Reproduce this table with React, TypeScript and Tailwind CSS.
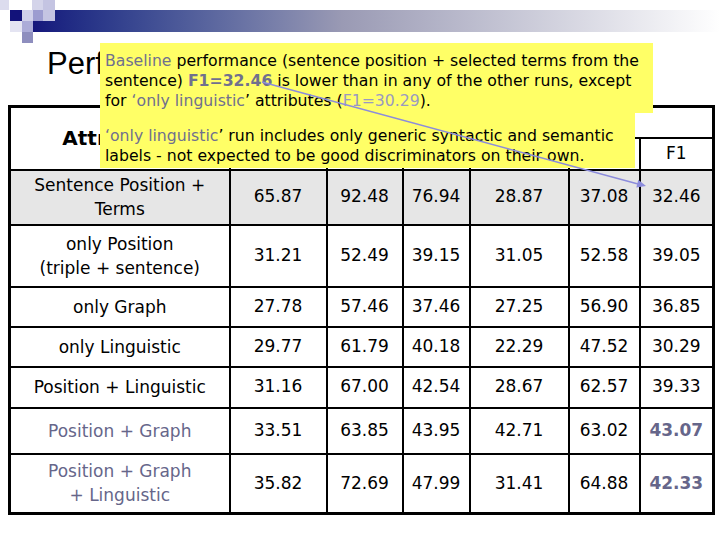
const rows = [
  { label: ["Sentence Position +", "Terms"], vals: ["65.87", "92.48", "76.94", "28.87", "37.08", "32.46"], h: "h-[55px]", bg: "bg-[#e6e6e6]", muted: false, best: false },
  { label: ["only Position", "(triple + sentence)"], vals: ["31.21", "52.49", "39.15", "31.05", "52.58", "39.05"], h: "h-[62px]", bg: "bg-white", muted: false, best: false },
  { label: ["only Graph"], vals: ["27.78", "57.46", "37.46", "27.25", "56.90", "36.85"], h: "h-[40px]", bg: "bg-white", muted: false, best: false },
  { label: ["only Linguistic"], vals: ["29.77", "61.79", "40.18", "22.29", "47.52", "30.29"], h: "h-[40px]", bg: "bg-white", muted: false, best: false },
  { label: ["Position + Linguistic"], vals: ["31.16", "67.00", "42.54", "28.67", "62.57", "39.33"], h: "h-[41px]", bg: "bg-white", muted: false, best: false },
  { label: ["Position + Graph"], vals: ["33.51", "63.85", "43.95", "42.71", "63.02", "43.07"], h: "h-[46px]", bg: "bg-white", muted: true, best: true },
  { label: ["Position + Graph", "+ Linguistic"], vals: ["35.82", "72.69", "47.99", "31.41", "64.88", "42.33"], h: "h-[60px]", bg: "bg-white", muted: true, best: true },
];

function Logo() {
  return (
    <svg width="56" height="44" viewBox="0 0 56 44">
      <rect x="0" y="0" width="9" height="10" fill="#dcdcee" />
      <rect x="32" y="0" width="11" height="10" fill="#d4d4ea" />
      <rect x="43" y="0" width="12" height="21" fill="#c4c4e2" />
      <rect x="10" y="10" width="12" height="11" fill="#12127a" />
      <rect x="22" y="10" width="11" height="11" fill="#d0d0ea" />
      <rect x="33" y="10" width="10" height="11" fill="#9c9cd0" />
      <rect x="10" y="21" width="12" height="11" fill="#e4e4f2" />
      <rect x="22" y="21" width="11" height="11" fill="#acacd8" />
      <rect x="22" y="32" width="11" height="11" fill="#8e8ebe" />
    </svg>
  );
}

export default function App() {
  return (
    <div className="relative w-[720px] h-[540px] overflow-hidden bg-white font-['DejaVu_Sans',sans-serif] text-black">
      {/* Header strip */}
      <div className="relative h-[44px] pt-[10px]">
        <div className="ml-[33px] h-[22px] bg-linear-to-r from-[#16167c] via-[#9a9ab4] via-45% to-white" />
        <div className="absolute left-0 top-0 z-10">
          <Logo />
        </div>
      </div>

      {/* Title */}
      <h1 className="ml-[47px] h-[61px] font-['Liberation_Sans',sans-serif] text-[31px] leading-[40px]">
        Performance
      </h1>

      {/* Table */}
      <table className="ml-[8px] w-[704px] table-fixed border-collapse border-[3px] border-black text-center text-[17px]">
        <colgroup>
          <col className="w-[220px]" />
          <col className="w-[97px]" />
          <col className="w-[76px]" />
          <col className="w-[67px]" />
          <col className="w-[99px]" />
          <col className="w-[71px]" />
          <col className="w-[74px]" />
        </colgroup>
        <thead>
          <tr className="h-[31px]">
            <th rowSpan={2} className="border-2 border-black text-[20px] font-bold">Attributes</th>
            <th colSpan={3} className="border-2 border-black font-normal"></th>
            <th colSpan={3} className="border-2 border-black font-normal"></th>
          </tr>
          <tr className="h-[32px]">
            <th className="border-2 border-black font-normal"></th>
            <th className="border-2 border-black font-normal"></th>
            <th className="border-2 border-black font-normal"></th>
            <th className="border-2 border-black font-normal"></th>
            <th className="border-2 border-black font-normal"></th>
            <th className="border-2 border-black font-normal">F1</th>
          </tr>
        </thead>
        <tbody>
          {rows.map((r) => (
            <tr key={r.label.join(" ")} className={`${r.h} ${r.bg}`}>
              <td className={`border-2 border-black leading-[24px] ${r.muted ? "text-[#66668a]" : ""}`}>
                {r.label.map((l) => (
                  <div key={l}>{l}</div>
                ))}
              </td>
              {r.vals.map((v, i) => (
                <td
                  key={i}
                  className={`border-2 border-black ${r.best && i === 5 ? "font-bold text-[#66668a]" : ""}`}
                >
                  {v}
                </td>
              ))}
            </tr>
          ))}
        </tbody>
      </table>

      {/* Callouts */}
      <div className="absolute left-[100px] top-[43px] w-[553px] h-[70px] bg-[#ffff66] px-[5px] pt-[8px] text-[15.7px] leading-[20px] whitespace-nowrap">
        <span className="text-[#70708e]">Baseline</span> performance (sentence position + selected terms from the
        <br />
        sentence) <span className="font-bold text-[#70708e]">F1=32.46</span> is lower than in any of the other runs, except
        <br />
        for <span className="text-[#70708e]">‘only linguistic</span>’ attributes (<span className="text-[#9a9ac0]">F1=30.29</span>).
      </div>
      <div className="absolute left-[100px] top-[113px] w-[535px] h-[55px] bg-[#ffff66] px-[5px] pt-[13px] text-[15.7px] leading-[20px] whitespace-nowrap">
        <span className="text-[#70708e]">‘only linguistic</span>’ run includes only generic syntactic and semantic
        <br />
        labels - not expected to be good discriminators on their own.
      </div>

      {/* Arrow */}
      <svg className="pointer-events-none absolute left-0 top-0" width="720" height="540">
        <line x1="262" y1="82" x2="638" y2="184" stroke="#8c8cdc" strokeWidth="1.5" />
        <polygon points="646,186 636.3,187.5 638.3,179.7" fill="#8c8cdc" />
      </svg>
    </div>
  );
}
